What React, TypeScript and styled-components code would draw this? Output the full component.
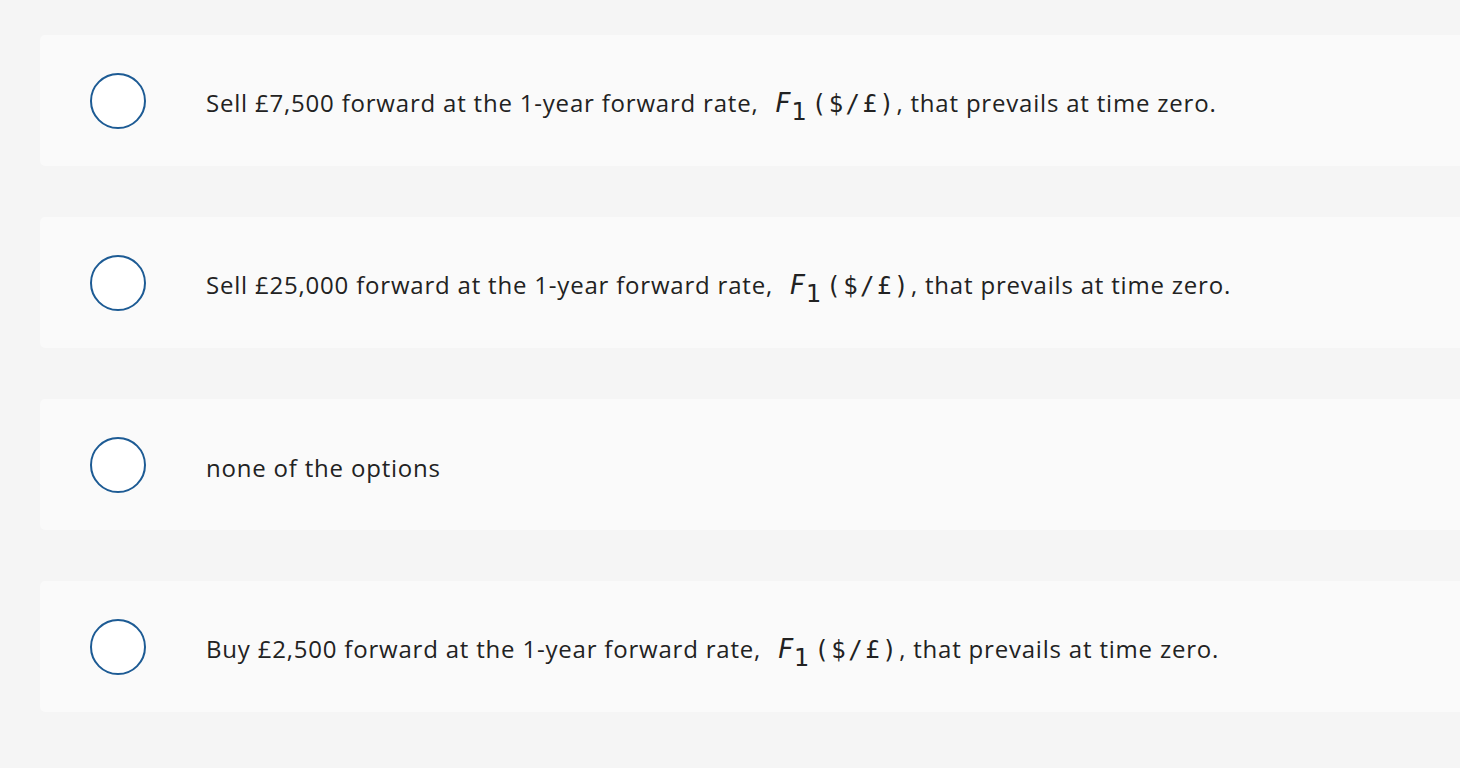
import React from "react";
import styled, { createGlobalStyle } from "styled-components";

const Global = createGlobalStyle`
  html, body { margin: 0; padding: 0; background: #f5f5f5; overflow: hidden; }
  body { font-family: "Open Sans", sans-serif; }
`;

const Page = styled.div`
  display: flex;
  flex-direction: column;
  gap: 51px;
  padding: 35px 0 0 40px;
  width: 1460px;
  height: 768px;
  box-sizing: border-box;
`;

const Card = styled.label`
  display: flex;
  align-items: center;
  width: 1440px;
  height: 131px;
  box-sizing: border-box;
  padding-left: 50px;
  background: #fafafa;
  border-radius: 5px;
  cursor: pointer;
`;

const Radio = styled.span`
  flex: none;
  width: 56px;
  height: 56px;
  box-sizing: border-box;
  border: 2px solid #1d5b94;
  border-radius: 50%;
  background: #ffffff;
  margin-right: 60px;
`;

const Text = styled.span`
  font-size: 24px;
  letter-spacing: 0.8px;
  line-height: 32px;
  color: #222222;
  white-space: pre;
  padding-top: 6px;
`;

const Math = styled.span`
  font-family: "DejaVu Sans", sans-serif;
  font-size: 26px;
  letter-spacing: 0;
  margin: 0 0 0 17px;
`;

const Var = styled.i`
  font-style: italic;
`;

const Sub = styled.span`
  font-size: 24px;
  vertical-align: -8px;
  line-height: 0;
  margin: 0 5px 0 1px;
`;

const Mono = styled.span`
  font-family: "DejaVu Sans Mono", monospace;
  font-size: 24px;
  letter-spacing: 2.5px;
`;

const F1 = () => (
  <Math>
    <Var>F</Var>
    <Sub>1</Sub>
    <Mono>($/£)</Mono>
  </Math>
);

const options = [
  { pre: "Sell £7,500 forward at the 1-year forward rate,", math: true },
  { pre: "Sell £25,000 forward at the 1-year forward rate,", math: true },
  { pre: "none of the options", math: false },
  { pre: "Buy £2,500 forward at the 1-year forward rate,", math: true },
];

export default function App() {
  return (
    <>
      <Global />
      <Page>
        {options.map((o, i) => (
          <Card key={i}>
            <Radio />
            <Text>
              {o.pre}
              {o.math && (
                <>
                  <F1 />
                  {", that prevails at time zero."}
                </>
              )}
            </Text>
          </Card>
        ))}
      </Page>
    </>
  );
}
